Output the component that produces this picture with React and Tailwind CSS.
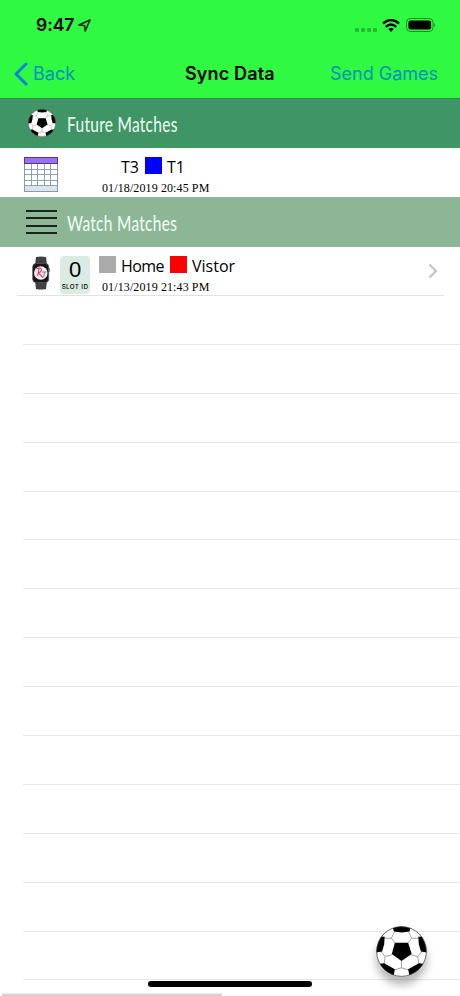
import React from 'react';

function Ball({ className, id }) {
  return (
    <svg viewBox="0 0 50 50" className={className}>
      <clipPath id={id}><circle cx="25" cy="25" r="24.5" /></clipPath>
      <g clipPath={`url(#${id})`}>
        <circle cx="25" cy="25" r="25" fill="#fff" />
        <g fill="none" stroke="#999" strokeWidth="0.9">
          <path d="M19 17L15 12L18 6M31 17L35 12L32 6M15 12L8 12M35 12L42 12M16 28L9 30L5 25M34 28L41 30L45 25M9 30L8 37M41 30L42 37M25 34V41L18 43M25 41L32 43" />
        </g>
        <g fill="#000">
          <path d="M18.5 16.5H31.5L35 27.5L25 34.2L15.5 27.5Z" />
          <path d="M16 0H34L33 5.5Q25 7 17.5 5.5Z" />
          <path d="M0 10L8.5 10.5L8 18L6 25L0 26Z" />
          <path d="M50 10L41.5 10.5L42 18L44 25L50 26Z" />
          <path d="M3 37L8 36.5L18.5 42.5L17 50H10Z" />
          <path d="M47 37L42 36.5L31.5 42.5L33 50H40Z" />
        </g>
      </g>
      <circle cx="25" cy="25" r="24.4" fill="none" stroke="#444" strokeWidth="0.8" />
    </svg>
  );
}

function Calendar() {
  return (
    <svg viewBox="0 0 34 35" className="h-[35px] w-[34px]">
      <rect x="0.5" y="0.5" width="33" height="34" fill="#fff" stroke="#8798ad" />
      <rect x="1" y="29" width="32" height="5" fill="#d7e6ec" />
      <path d="M7.5 7V29M13.5 7V29M20.5 7V29M26.5 7V29M1 12.5H33M1 17.5H33M1 23.5H33M1 28.5H33" stroke="#8496b0" strokeWidth="0.9" />
      <rect x="0.5" y="0.5" width="33" height="6" fill="#9b70ed" stroke="#54359b" />
    </svg>
  );
}

function Watch() {
  return (
    <svg viewBox="0 0 18 34" className="h-[34px] w-[18px]">
      <path d="M4 1Q9 0 14 1L15 9H3ZM3 25H15L14 33Q9 34 4 33Z" fill="#414143" />
      <rect x="0.7" y="7.5" width="16" height="19" rx="3.5" fill="#171719" stroke="#555" strokeWidth="0.8" />
      <rect x="16.5" y="12" width="1.2" height="4" rx="0.5" fill="#555" />
      <circle cx="8.8" cy="17" r="6.8" fill="#f4e9ed" />
      <path d="M4.5 12.8Q9.5 11 9.5 14Q9 16 6.5 17L11 21.5M7 13L5.5 20" fill="none" stroke="#d94870" strokeWidth="1.1" />
      <path d="M9.8 16H14.5M12.3 16L11.8 21" stroke="#888" strokeWidth="1" />
    </svg>
  );
}

function StatusBar() {
  return (
    <div className="flex h-[50px] items-center pl-[36px] pr-[24px]">
      <span className="w-[39px] whitespace-nowrap text-[17.5px] font-semibold tracking-[-0.05px]">9:47</span>
      <svg viewBox="0 0 13 13" className="ml-[3px] h-[13px] w-[13px]">
        <path d="M1 6L12 1L7.2 12L6.5 6.5Z" fill="none" stroke="#052905" strokeWidth="1.6" strokeLinejoin="round" />
      </svg>
      <div className="ml-auto mt-[9px] flex gap-[2px]">
        {[0, 1, 2, 3].map((n) => <i key={n} className="h-[4px] w-[4px] rounded-[1px] bg-[#25bc32]" />)}
      </div>
      <svg viewBox="0 0 18 13" className="ml-[5px] h-[13px] w-[18px]">
        <path d="M1 4.5Q9 -2.5 17 4.5M3.8 7.8Q9 3.2 14.2 7.8" fill="none" stroke="#000" strokeWidth="2.4" />
        <path d="M6.3 10Q9 7.8 11.7 10L9 12.9Z" />
      </svg>
      <svg viewBox="0 0 30 14" className="ml-[6px] h-[14px] w-[30px]">
        <rect x="0.5" y="0.5" width="26.5" height="13" rx="4" fill="none" stroke="#188d20" />
        <rect x="2.4" y="2.4" width="22.7" height="9.2" rx="2.3" />
        <path d="M28.2 5Q30.2 7 28.2 9Z" fill="#188d20" />
      </svg>
    </div>
  );
}

function SectionHeader({ icon, title, className }) {
  return (
    <div className={`flex items-center ${className}`}>
      <div className="flex w-[67px] shrink-0 pl-[26px]">{icon}</div>
      <span className="mt-[3px] origin-left scale-x-[0.72] whitespace-nowrap font-['Lato',sans-serif] text-[21.5px] leading-none tracking-[0.4px] text-[#f1fff3]">{title}</span>
    </div>
  );
}

function Teams({ children, date }) {
  return (
    <div className="flex flex-col">
      <div className="flex h-[22px] items-center font-['Open_Sans',sans-serif] text-[16px] text-black">{children}</div>
      <span className="ml-[3px] mt-[3px] whitespace-nowrap font-['Liberation_Serif',serif] text-[12px] leading-[14px] tracking-[0.11px]">{date}</span>
    </div>
  );
}

export default function App() {
  return (
    <div className="relative h-[996px] w-[460px] overflow-hidden bg-white font-['Inter',sans-serif] text-black">
      <header className="h-[98px] bg-[#2ff941]">
        <StatusBar />
        <nav className="flex h-[48px] items-center pl-[14px] text-[18px]">
          <svg viewBox="0 0 14 24" className="h-[24px] w-[14px]">
            <path d="M12 2L2 12L12 22" fill="none" stroke="#087fe0" strokeWidth="2.9" strokeLinecap="round" strokeLinejoin="round" />
          </svg>
          <span className="mb-[2px] ml-[5px] w-[152px] text-[#0790bd]">Back</span>
          <span className="mb-[2px] w-[145px] whitespace-nowrap font-semibold tracking-[0.15px]">Sync Data</span>
          <span className="mb-[2px] whitespace-nowrap text-[#0790bd]">Send Games</span>
        </nav>
      </header>
      <SectionHeader
        title="Future Matches"
        className="h-[50px] border-t border-[#368359] bg-[#3f9565]"
        icon={<Ball id="headerBall" className="-mt-[2px] ml-[2px] h-[28px] w-[28px]" />}
      />
      <div className="flex h-[49px] items-start pl-[24px] pt-[8px]">
        <div className="mt-[1px] w-[75px]"><Calendar /></div>
        <Teams date="01/18/2019 20:45 PM">
          <span className="ml-[22px] w-[24px]">T3</span>
          <i className="mb-[3px] h-[17px] w-[17px] bg-[#0000fe]" />
          <span className="ml-[5px]">T1</span>
        </Teams>
      </div>
      <SectionHeader
        title="Watch Matches"
        className="h-[50px] bg-[#8db697]"
        icon={
          <div className="flex flex-col gap-[5.4px]">
            {[0, 1, 2, 3].map((n) => <i key={n} className="h-[2px] w-[31px] bg-[#19251b]" />)}
          </div>
        }
      />
      <div className="ml-[17px] mr-[16px] flex h-[49px] items-start border-b border-[#e1e3e2] pl-[15px] pt-[9px]">
        <Watch />
        <div className="ml-[10px] flex h-[38px] w-[30px] flex-col items-center rounded-[4px] bg-[#d9ebe2]">
          <span className="mt-[3px] h-[22px] font-['Liberation_Sans',sans-serif] text-[22px] leading-[22px]">0</span>
          <span className="mt-[3px] whitespace-nowrap text-[6.3px] font-medium leading-[7px] tracking-[0.35px]">SLOT ID</span>
        </div>
        <div className="-mt-px ml-[9px]">
          <Teams date="01/13/2019 21:43 PM">
            <i className="mb-[3px] h-[17px] w-[17px] bg-[#aaa]" />
            <span className="ml-[5px] w-[49px] tracking-[-0.6px]">Home</span>
            <i className="mb-[3px] h-[17px] w-[17px] bg-[#fe0000]" />
            <span className="ml-[5px]">Vistor</span>
          </Teams>
        </div>
        <svg viewBox="0 0 10 16" className="ml-auto mr-[6px] mt-[7px] h-[16px] w-[10px]">
          <path d="M1.5 1.5L8 8L1.5 14.5" fill="none" stroke="#c5c5c7" strokeWidth="2.3" />
        </svg>
      </div>
      <div className="ml-[23px]">
        {Array.from({ length: 14 }, (_, n) => <div key={n} className="h-[48.9px] border-b border-[#e7e8e7]" />)}
      </div>
      <div className="absolute left-[376px] top-[926px] h-[51px] w-[51px] rounded-full shadow-[0_8px_9px_rgba(0,0,0,0.28)]">
        <Ball id="floatingBall" className="h-full w-full" />
      </div>
      <div className="absolute left-[148px] top-[981px] h-[6px] w-[164px] rounded-full bg-black" />
      <div className="absolute left-[2px] top-[993px] h-[3px] w-[220px] bg-gradient-to-b from-[#eeeeee] to-[#c6c6c6]" />
    </div>
  );
}
